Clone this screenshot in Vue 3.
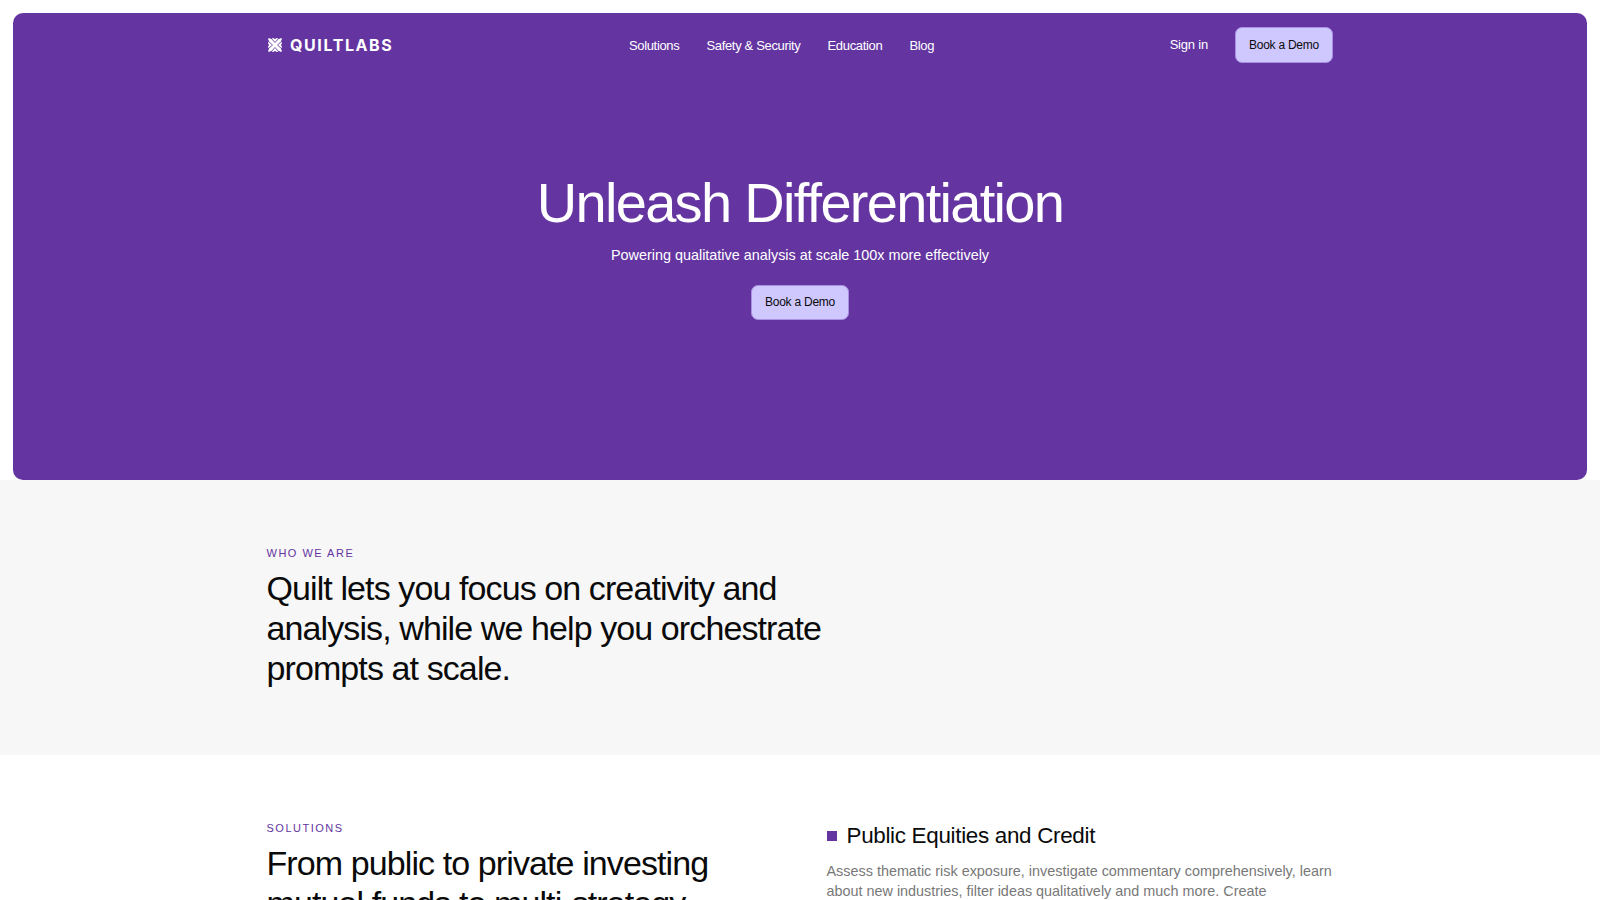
<script setup>
const links = ['Solutions', 'Safety & Security', 'Education', 'Blog']
</script>

<template>
  <div class="page">
    <header class="hero">
      <nav class="nav">
        <a class="brand">
          <svg class="mark" viewBox="0 0 16 16" width="16" height="16" aria-hidden="true">
            <path fill="#fff" d="M1 2 2 1l2 1 2-1 2 1 2-1 2 1 2-1 1 1-1 2 1 2-1 2 1 2-1 2 1 2-1 1-2-1-2 1-2-1-2 1-2-1-2 1-1-1 1-2-1-2 1-2-1-2 1-2z"/>
            <g stroke="#6435a1" stroke-width="0.85" fill="none">
              <path d="M3.5 0.5 8 5.5 12.5 0.5M0.5 3.5 5.5 8 0.5 12.5M15.5 3.5 10.5 8 15.5 12.5M3.5 15.5 8 10.5 12.5 15.5"/>
            </g>
          </svg>
          <span class="brand-name">QUILTLABS</span>
        </a>
        <ul class="links">
          <li v-for="l in links" :key="l">{{ l }}</li>
        </ul>
        <div class="actions">
          <a class="signin">Sign in</a>
          <button class="demo">Book a Demo</button>
        </div>
      </nav>
      <div class="hero-body">
        <h1>Unleash Differentiation</h1>
        <p>Powering qualitative analysis at scale 100x more effectively</p>
        <button class="demo">Book a Demo</button>
      </div>
    </header>

    <section class="who">
      <div class="wrap">
        <div class="eyebrow">WHO WE ARE</div>
        <h2>Quilt lets you focus on creativity and analysis, while we help you orchestrate prompts at scale.</h2>
      </div>
    </section>

    <section class="solutions">
      <div class="wrap cols">
        <div class="col-left">
          <div class="eyebrow">SOLUTIONS</div>
          <h2>From public to private investing mutual funds to multi-strategy hedge funds</h2>
        </div>
        <div class="col-right">
          <h3><span class="square"></span>Public Equities and Credit</h3>
          <p>Assess thematic risk exposure, investigate commentary comprehensively, learn about new industries, filter ideas qualitatively and much more. Create</p>
        </div>
      </div>
    </section>
  </div>
</template>

<style>
html, body { margin: 0; background: #fff; }
</style>

<style scoped>
.page {
  height: 900px;
  overflow: hidden;
  padding-top: 13px;
  box-sizing: border-box;
  font-family: "Liberation Sans", Arial, sans-serif;
  color: #0a0a0a;
}
.hero {
  margin: 0 13px;
  height: 467px;
  background: #6435a1;
  border-radius: 10px;
  color: #fff;
  display: flex;
  flex-direction: column;
}
.nav {
  width: 1066px;
  margin: 0 auto;
  padding-top: 14px;
  display: flex;
  justify-content: space-between;
  align-items: center;
}
.brand { display: flex; align-items: center; gap: 7px; }
.mark { display: block; }
.brand-name {
  font-family: Inter, sans-serif;
  font-weight: 700;
  font-size: 16px;
  letter-spacing: 1.6px;
}
.links {
  list-style: none;
  display: flex;
  gap: 27px;
  margin: 1px 0 0;
  padding: 0;
  font-size: 13px;
  letter-spacing: -0.33px;
}
.actions { display: flex; align-items: center; gap: 27px; font-size: 13px; }
.signin { letter-spacing: -0.2px; }
.demo {
  width: 98px;
  height: 35.5px;
  padding: 0;
  background: #cfc8ff;
  border: 1px solid #a98fe0;
  border-radius: 7px;
  color: #0a0a0a;
  font: 12px "Liberation Sans", Arial, sans-serif;
  letter-spacing: -0.25px;
}
.hero-body {
  display: flex;
  flex-direction: column;
  align-items: center;
  margin-top: 108px;
}
h1 {
  margin: 0;
  font-size: 56px;
  line-height: 64px;
  font-weight: 400;
  letter-spacing: -1.7px;
}
.hero-body p { margin: 10px 0 20px; font-size: 14.4px; line-height: 20px; }
.who { background: #f7f7f7; height: 275px; padding-top: 66px; box-sizing: border-box; }
.wrap { width: 1067px; margin: 0 auto; }
.eyebrow { font-size: 11px; letter-spacing: 1.5px; color: #6435a1; line-height: 15px; }
h2 {
  margin: 7px 0 0;
  width: 570px;
  font-size: 34px;
  line-height: 40px;
  font-weight: 400;
  letter-spacing: -0.9px;
}
.solutions { padding-top: 66px; }
.cols { display: flex; justify-content: space-between; }
.col-left h2 { width: 470px; }
.col-right { width: 507px; }
h3 { margin: 0; display: flex; align-items: center; gap: 10px; font-size: 22.4px; line-height: 29px; font-weight: 400; letter-spacing: -0.3px; }
.square { width: 10px; height: 10px; background: #6435a1; }
.col-right p { margin: 11px 0 0; font-size: 14.4px; line-height: 20.2px; color: #787878; }
</style>
